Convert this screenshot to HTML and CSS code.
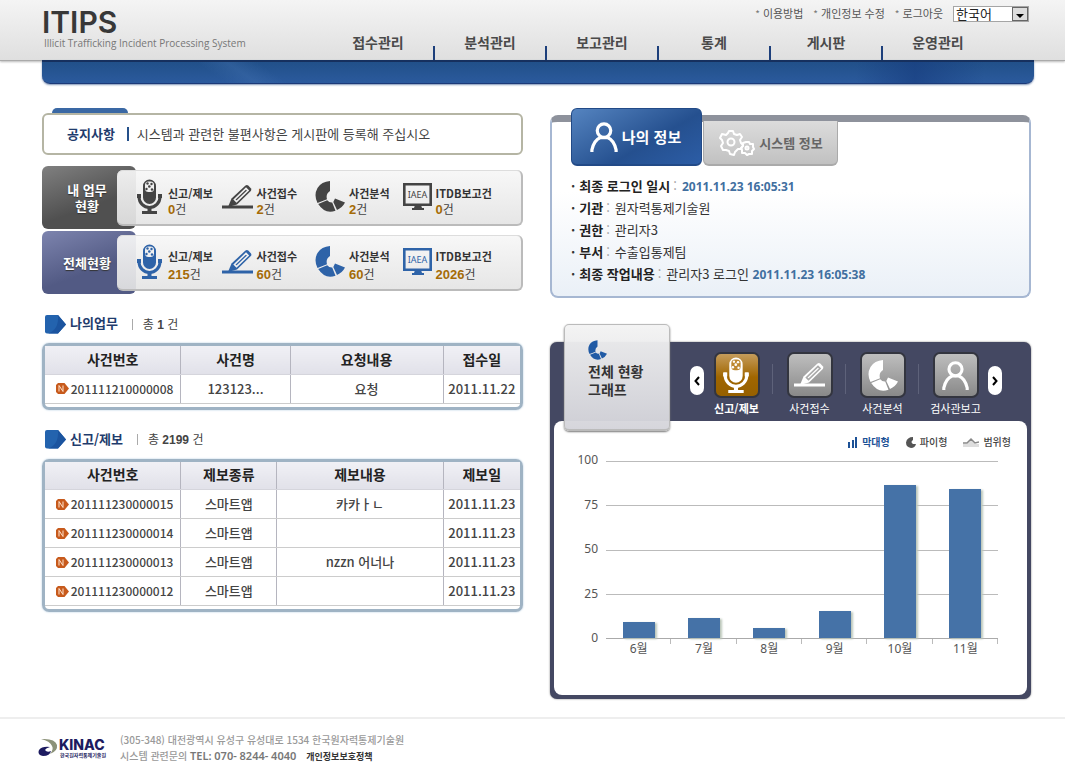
FILE: index.html
```html
<!DOCTYPE html>
<html lang="ko">
<head>
<meta charset="utf-8">
<meta name="viewport" content="width=device-width, initial-scale=1">
<title>ITIPS</title>
<link rel="stylesheet" href="styles.css">
</head>
<body>
<svg class="defs" width="0" height="0" aria-hidden="true">
  <symbol id="mic" viewBox="0 0 27 36">
    <path fill="currentColor" d="M6 7a6.500 6.500 0 0 1 13 0v11.500a6.500 6.500 0 0 1-13 0z"/>
    <rect x="8" y="2.500" width="9" height="10.500" rx="3.500" fill="var(--mesh,#f0f0f0)"/>
    <g fill="currentColor"><circle cx="10.500" cy="4.500" r="1.200"/><circle cx="14.500" cy="5" r="1.200"/><circle cx="12.300" cy="7.500" r="1.300"/><circle cx="9.500" cy="10" r="1.200"/><circle cx="15" cy="10.500" r="1.200"/></g>
    <path fill="none" stroke="currentColor" stroke-width="3" d="M2 15v3a10.500 10.500 0 0 0 21 0v-3"/>
    <path fill="currentColor" d="M0 15h4v4H0zM21 15h4v4h-4zM10.500 28h4v5h-4zM5 32h15v3H5z"/>
  </symbol>
  <symbol id="pen" viewBox="0 0 31 26">
    <path fill="currentColor" d="M0 21.500h31v3H0z"/>
    <path fill="currentColor" d="M6 23l3.500-8.500L23.500 1.500q1.500-1 3 .3l2.300 2.400q1.200 1.500 0 2.800L15 20.500z"/>
    <path fill="none" stroke="var(--mesh,#f0f0f0)" stroke-width="1.700" d="M12.500 15.500L24 4.500l2 2-11.500 11z"/>
  </symbol>
  <symbol id="pie" viewBox="0 0 30 31">
    <path fill="currentColor" d="M15 0v10q-4.500 3-3 8.300L2.500 22Q-1.500 14 2.500 7 6.500.5 15 0zM3.200 23l9-3.700q2 2.400 5 2.200l3.300 8.200Q10 33.500 3.200 23zM18.300 21l1.700-3.500 10 4q-2.500 5-8 7.500z"/>
  </symbol>
  <symbol id="monitor" viewBox="0 0 29 28">
    <path fill="none" stroke="currentColor" stroke-width="2.600" d="M1.300 1.300h26.400v20.400H1.300z"/>
    <path fill="currentColor" d="M12 22h6l1 3h2v2H9v-2h2z"/>
  </symbol>
  <symbol id="person" viewBox="0 0 26 28">
    <g fill="none" stroke="currentColor" stroke-width="3"><circle cx="13" cy="8" r="6.300"/><path d="M1.700 28v-2q2-9 8-11.500h6.600q6 2.500 8 11.500v2"/></g>
  </symbol>
  <symbol id="mark" viewBox="0 0 21 19">
    <path fill="#2363ae" d="M0 2q0-2 2-2h11l8 9.500-8 9H2q-2 0-2-2z"/><path fill="#1b549f" d="M13 0l8 9.500-8 9H3Q14 15 13 0z"/>
  </symbol>
  <symbol id="new" viewBox="0 0 13 11">
    <path fill="#c75a1c" d="M2 0h6.500L13 5.500 8.500 11H2L0 9V2z"/><path fill="none" stroke="#ffe4cf" d="M3 8.500v-6l4 6v-6"/>
  </symbol>
</svg>

<header class="top">
  <div class="top-inner">
    <a class="brand" href="#"><strong>ITIPS</strong><span>Illicit Trafficking Incident Processing System</span></a>
    <div class="top-right">
      <div class="util">
        <a href="#">이용방법</a><a href="#">개인정보 수정</a><a href="#">로그아웃</a>
        <label class="lang"><select aria-label="언어"><option>한국어</option><option>English</option></select><span class="lang-arrow"></span></label>
      </div>
      <nav class="gnb"><a href="#">접수관리</a><a href="#">분석관리</a><a href="#">보고관리</a><a href="#">통계</a><a href="#">게시판</a><a href="#">운영관리</a></nav>
    </div>
  </div>
</header>
<div class="bluebar"></div>

<main class="page">
  <div class="col">
    <section class="notice">
      <div class="notice-tab"></div>
      <div class="notice-box"><h2>공지사항</h2><p>시스템과 관련한 불편사항은 게시판에 등록해 주십시오</p></div>
    </section>
    <section class="status">
      <h2>내 업무<br>현황</h2>
      <ul>
        <li><svg width="27" height="36"><use href="#mic"/></svg><div><b>신고/제보</b><span><em>0</em>건</span></div></li>
        <li><svg width="31" height="26"><use href="#pen"/></svg><div><b>사건접수</b><span><em>2</em>건</span></div></li>
        <li><svg width="30" height="31"><use href="#pie"/></svg><div><b>사건분석</b><span><em>2</em>건</span></div></li>
        <li><svg width="29" height="28"><use href="#monitor"/><text class="iaea" x="14.500" y="15" text-anchor="middle">IAEA</text></svg><div><b>ITDB보고건</b><span><em>0</em>건</span></div></li>
      </ul>
    </section>
    <section class="status status-all">
      <h2>전체현황</h2>
      <ul>
        <li><svg width="27" height="36"><use href="#mic"/></svg><div><b>신고/제보</b><span><em>215</em>건</span></div></li>
        <li><svg width="31" height="26"><use href="#pen"/></svg><div><b>사건접수</b><span><em>60</em>건</span></div></li>
        <li><svg width="30" height="31"><use href="#pie"/></svg><div><b>사건분석</b><span><em>60</em>건</span></div></li>
        <li><svg width="29" height="28"><use href="#monitor"/><text class="iaea" x="14.500" y="15" text-anchor="middle">IAEA</text></svg><div><b>ITDB보고건</b><span><em>2026</em>건</span></div></li>
      </ul>
    </section>

    <section>
      <div class="head"><svg width="21" height="19"><use href="#mark"/></svg><h2>나의업무</h2><p>총 <b>1</b> 건</p></div>
      <div class="box">
        <table class="t-task">
          <thead><tr><th>사건번호</th><th>사건명</th><th>요청내용</th><th>접수일</th></tr></thead>
          <tbody><tr><td><a href="#"><svg width="13" height="11"><use href="#new"/></svg>201111210000008</a></td><td>123123...</td><td>요청</td><td>2011.11.22</td></tr></tbody>
        </table>
      </div>
    </section>
    <section>
      <div class="head"><svg width="21" height="19"><use href="#mark"/></svg><h2>신고/제보</h2><p>총 <b>2199</b> 건</p></div>
      <div class="box">
        <table class="t-report">
          <thead><tr><th>사건번호</th><th>제보종류</th><th>제보내용</th><th>제보일</th></tr></thead>
          <tbody>
            <tr><td><a href="#"><svg width="13" height="11"><use href="#new"/></svg>201111230000015</a></td><td>스마트앱</td><td>카카ㅏㄴ</td><td>2011.11.23</td></tr>
            <tr><td><a href="#"><svg width="13" height="11"><use href="#new"/></svg>201111230000014</a></td><td>스마트앱</td><td></td><td>2011.11.23</td></tr>
            <tr><td><a href="#"><svg width="13" height="11"><use href="#new"/></svg>201111230000013</a></td><td>스마트앱</td><td>nzzn 어너나</td><td>2011.11.23</td></tr>
            <tr><td><a href="#"><svg width="13" height="11"><use href="#new"/></svg>201111230000012</a></td><td>스마트앱</td><td></td><td>2011.11.23</td></tr>
          </tbody>
        </table>
      </div>
    </section>
  </div>

  <div class="col">
    <section class="info">
      <div class="tabs">
        <button class="tab tab-on" type="button"><svg width="28" height="30" viewBox="0 0 26 28"><use href="#person"/></svg>나의 정보</button>
        <button class="tab" type="button"><svg width="37" height="28" viewBox="0 0 37 28" fill="none" stroke="#fff" stroke-width="2"><circle cx="13" cy="13" r="3.500"/><path stroke-linejoin="round" d="M11 2l4 0 1 3 3 1 3-1 2 3-2 3 1 3 2 2-2 4-3 0-3 3-1 3-4-1-1-3-3-1-3 0-2-4 2-3-1-3-2-2 2-4 4 1 2-2z"/><circle cx="29" cy="19" r="1.500"/><path stroke-linejoin="round" d="M28 13l3 0 1 2 3 0 0 3 1 2-2 2 0 3-3 0-2 1-2-2-3 0 0-3-1-2 2-2 0-3z"/></svg>시스템 정보</button>
      </div>
      <ul class="facts">
        <li><b>최종 로그인 일시</b><i>:</i><strong>2011.11.23 16:05:31</strong></li>
        <li><b>기관</b><i>:</i>원자력통제기술원</li>
        <li><b>권한</b><i>:</i>관리자3</li>
        <li><b>부서</b><i>:</i>수출입통제팀</li>
        <li><b>최종 작업내용</b><i>:</i>관리자3 로그인 <strong>2011.11.23 16:05:38</strong></li>
      </ul>
    </section>

    <section class="graph">
      <div class="graph-head">
        <h2><svg width="19" height="20"><use href="#pie"/></svg>전체 현황<br>그래프</h2>
        <div class="picker">
          <button class="arrow" type="button" aria-label="이전"><svg width="6" height="10" viewBox="0 0 6 10"><path d="M5 1L1.500 5 5 9"/></svg></button>
          <button class="kind kind-on" type="button"><span><svg width="28" height="37"><use href="#mic"/></svg></span>신고/제보</button>
          <button class="kind" type="button"><span><svg width="31" height="26"><use href="#pen"/></svg></span>사건접수</button>
          <button class="kind" type="button"><span><svg width="30" height="31"><use href="#pie"/></svg></span>사건분석</button>
          <button class="kind" type="button"><span><svg width="27" height="29"><use href="#person"/></svg></span>검사관보고</button>
          <button class="arrow" type="button" aria-label="다음"><svg width="6" height="10" viewBox="0 0 6 10"><path d="M1 1l3.500 4L1 9"/></svg></button>
        </div>
      </div>
      <div class="graph-body">
        <div class="types">
          <button class="type-on" type="button"><svg width="10" height="11" viewBox="0 0 10 11"><path fill="#1c5196" d="M0 5h2v6H0zM4 3h2v8H4zM7 0h2v11H7z"/></svg>막대형</button>
          <button type="button"><svg width="10" height="11" viewBox="0 0 10 11"><path fill="#555" d="M7 0v3q-3 2 0 4h3q-1 4-5 4-5-1-5-5.500Q1 0 7 0z"/></svg>파이형</button>
          <button type="button"><svg width="16" height="10" viewBox="0 0 16 10"><path fill="#ddd" d="M0 7h4l4-5 4 5h4v3H0z"/><path fill="none" stroke="#888" stroke-width="1.500" d="M0 6h4l4-4 4 4 4-1"/></svg>범위형</button>
        </div>
        <div class="chart">
          <div class="y-axis"><span>100</span><span>75</span><span>50</span><span>25</span><span>0</span></div>
          <div class="grid-lines"><i></i><i></i><i></i><i></i></div>
          <div class="bars">
            <div><i style="height:9%"></i></div><div><i style="height:11.5%"></i></div><div><i style="height:5.500%"></i></div><div><i style="height:15.500%"></i></div><div><i style="height:86.500%"></i></div><div><i style="height:84%"></i></div>
          </div>
          <div class="x-axis"><span>6월</span><span>7월</span><span>8월</span><span>9월</span><span>10월</span><span>11월</span></div>
        </div>
      </div>
    </section>
  </div>
</main>

<footer class="foot">
  <svg class="kinac" width="70" height="24" viewBox="0 0 70 24" role="img" aria-label="KINAC">
    <path fill="#8c9279" d="M3 2q14-1 16 6 1 6-7 9 4-5 2-8Q12 4 3 2z"/>
    <path fill="#1d1b60" d="M12 10Q4 9 1 13q-2 5 4 6 7 0 8-5-4 2-6-1 1-2 5-3z"/>
    <text class="kinac-name" x="21" y="13">KINAC</text><text class="kinac-sub" x="22" y="20">한국원자력통제기술원</text>
  </svg>
  <div class="addr">
    <p>(305-348) 대전광역시 유성구 유성대로 1534 한국원자력통제기술원</p>
    <p>시스템 관련문의 <b>TEL: 070- 8244- 4040</b><a href="#">개인정보보호정책</a></p>
  </div>
</footer>
</body>
</html>
```

FILE: styles.css
```css
* { box-sizing: border-box; }
body { margin: 0; background: #fff; color: #444; font: 13px/16px "Noto Sans CJK KR", sans-serif; }
h2, p, ul { margin: 0; padding: 0; font-size: inherit; }
ul { list-style: none; }
a { color: inherit; text-decoration: none; }
em, i { font-style: normal; }
button { border: 0; padding: 0; background: none; color: inherit; font: inherit; cursor: pointer; }
svg { display: block; flex: none; }
.defs { position: absolute; }

/* header */
.top { background: linear-gradient(#f4f4f4, #dfdfdf); border-bottom: 1px solid #aaa; box-shadow: 0 1px 2px #bbb; }
.top-inner { display: flex; justify-content: space-between; height: 60px; padding: 0 36px 0 42px; }
.brand { padding-top: 7px; color: #383838; }
.brand strong { display: block; font: 600 30px/30px "Inter", sans-serif; }
.brand span { display: block; padding-left: 2px; color: #777; font: 10px/12px "Open Sans", sans-serif; }
.top-right { display: flex; flex-direction: column; justify-content: space-between; align-items: flex-end; }
.util { display: flex; align-items: center; gap: 10px; padding-top: 5px; font-size: 11px; color: #555; }
.util a::before { content: "*"; padding-right: 3px; font-size: 10px; color: #777; }
.lang { position: relative; display: flex; }
.lang select { appearance: none; width: 76px; height: 16px; padding: 0 2px; border: 1px solid #a5a5a5; border-radius: 0; background: #fff; color: #222; font: 13px/14px "Noto Sans CJK KR", sans-serif; }
.lang-arrow { position: absolute; top: 1px; right: 1px; width: 16px; height: 14px; border: 1px solid #666; background: #ddd; pointer-events: none; }
.lang-arrow::after { content: ""; position: absolute; left: 3px; top: 6px; border: 4px solid transparent; border-top-color: #000; border-bottom: 0; }
.gnb { display: flex; padding-right: 34px; }
.gnb a { width: 112px; height: 27px; padding-right: 2px; color: #4a4a4a; font-size: 14px; font-weight: 700; line-height: 18px; text-align: center; background: linear-gradient(#1d3f7b, #1d3f7b) right bottom / 2px 14px no-repeat; }
.gnb a:last-child { background: none; }
.bluebar { position: relative; height: 24px; margin: -1px 31px 0 42px; border-top: 2px solid #16305e; border-bottom: 1px solid #1c3a78; border-radius: 0 0 8px 8px; box-shadow: 0 1px 2px #7d93b5; background: linear-gradient(35deg, transparent 18%, #3f6eac66 21%, transparent 24%), linear-gradient(90deg, transparent 82%, #163b7e99 88%, transparent 95%), linear-gradient(#215089, #2b5a9d); }

/* two-column page */
.page { display: grid; grid-template-columns: 1fr 1fr; gap: 27px; padding: 24px 34px 0 42px; }
.notice-tab { width: 76px; height: 5px; margin-left: 10px; border-radius: 5px 5px 0 0; background: #3a68a4; }
.notice-box { display: flex; align-items: center; height: 42px; padding-left: 23px; border: 2px solid #b5b5a4; border-radius: 6px; }
.notice-box h2 { padding-right: 12px; border-right: 2px solid #25508a; color: #1f3c6d; line-height: 14px; }
.notice-box p { padding-left: 8px; }

.status { display: flex; align-items: center; margin-top: 11px; }
.status + .status { margin-top: 2px; }
.status h2 { display: grid; align-content: center; width: 94px; height: 63px; padding: 0 19px 0 15px; border-radius: 6px; background: linear-gradient(160deg, #808080, #505050 60%); color: #fff; text-align: center; white-space: nowrap; text-shadow: 0 1px 1px #333; }
.status-all h2 { background: linear-gradient(160deg, #7d84ae, #525a84 60%); }
.status ul { position: relative; flex: 1; display: grid; grid-template-columns: 85fr 94fr 88fr 119fr; height: 56px; margin-left: -19px; padding-left: 20px; border: solid #bbb; border-width: 0 2px 2px 0; border-radius: 6px; background: linear-gradient(#f7f7f7ee, #e4e4e4ea); box-shadow: inset 0 1px #ddd; }
.status li { display: flex; align-items: center; gap: 4px; }
.status-all svg { color: #2e63a8; }
.status b, .status span { display: block; white-space: nowrap; }
.status b { font-size: 11px; color: #333; }
.status span { font-size: 12px; }
.status div { padding-top: 9px; }
.status-all span { line-height: 20px; }
.status em { font-weight: 700; font-family: "Liberation Sans", sans-serif; font-size: 13px; color: #a56b06; }
.iaea { font: 9px "Noto Sans", sans-serif; fill: currentColor; }

.head { display: flex; align-items: center; height: 20px; margin: 20px 0 9px 3px; }
.head h2 { padding: 0 14px 2px 4px; color: #1f3c6d; }
.head p { padding-left: 10px; border-left: 1px solid #aaa; font-size: 12px; line-height: 10px; }
.head b { font: 700 12px/10px "Liberation Sans", sans-serif; }
.box { padding-bottom: 3px; border: 3px solid #9fb3c4; border-radius: 7px; box-shadow: 0 0 2px #a9c4dc; }
table { width: 100%; table-layout: fixed; border-collapse: collapse; }
th, td { height: 29px; padding: 0; border-bottom: 1px solid #ccc; border-left: 1px solid #b5b5bf; text-align: center; white-space: nowrap; }
th { height: 28px; padding-bottom: 2px; background: linear-gradient(#f0f0f5, #e1e1e9); border-bottom-color: #d5d5dc; color: #222; font-size: 14px; }
td { font-weight: 500; }
th:first-child, td:first-child { border-left: 0; }
td a { display: flex; align-items: center; justify-content: flex-end; gap: 2px; padding-right: 7px; font-size: 12px; }
th:nth-child(1) { width: 28.600%; }
.t-task th:nth-child(2) { width: 23%; }
.t-report th:nth-child(2) { width: 20.200%; }
th:nth-child(4) { width: 16.200%; }

/* my information */
.info { margin-top: 7px; border: 2px solid #a6b7d2; border-top: 7px solid #8e929c; border-radius: 8px; background: linear-gradient(#fff 40%, #eaf0f7); }
.tabs { display: flex; align-items: flex-end; gap: 1px; margin: -14px 0 0 19px; }
.tab { display: flex; align-items: center; justify-content: center; gap: 4px; width: 135px; height: 45px; border: solid #aaa; border-width: 0 1px 2px; border-radius: 0 0 6px 6px; background: linear-gradient(#dcdcdc, #c1c1c1); color: #666; font-weight: 700; }
.tab-on { width: 131px; height: 58px; padding-right: 2px; border: 1px solid #224a87; border-bottom-width: 2px; border-radius: 6px; background: linear-gradient(150deg, #5584c0, #25508f 60%, #2c5da6); color: #fff; font-size: 15px; }
.facts { padding: 9px 0 11px 19px; line-height: 22px; color: #333; }
.facts li::before { content: "·"; padding-right: 4px; font-weight: 700; }
.facts b { color: #222; }
.facts i { padding: 0 5px 0 3px; color: #999; }
.facts strong { font: 700 12px "Noto Sans", sans-serif; color: #416f9f; }

/* graph panel */
.graph { margin-top: 44px; padding: 0 4px 4px; border-radius: 7px; background: #444862; box-shadow: 0 0 2px #777; }
.graph-head { display: flex; justify-content: space-between; height: 79px; }
.graph h2 { position: relative; width: 106px; height: 107px; margin: -18px 0 0 10px; padding: 15px 0 0 23px; border: 1px solid #bbb; border-bottom-width: 2px; border-radius: 5px; background: linear-gradient(#f3f3f3f5, #d4d4daf5); box-shadow: 0 1px 2px #777; color: #333; font-size: 14px; line-height: 18px; }
.graph h2 svg { margin-bottom: 2px; color: #205aa5; }
.picker { display: flex; padding: 10px 25px 0 0; color: #fff; }
.kind { width: 73px; height: 66px; font-size: 11px; line-height: 20px; display: flex; flex-direction: column; align-items: center; background: linear-gradient(#5e627a, #5e627a) right 12px / 1px 30px no-repeat; }
.kind:nth-last-child(2) { background: none; }
.kind span { --mesh: #aaa; display: grid; place-items: center; width: 46px; height: 47px; border: 2px solid #33353f; border-radius: 7px; background: linear-gradient(#bebebe, #898989); }
.kind-on { font-weight: 700; }
.kind-on span { --mesh: #bd882f; background: linear-gradient(#c59c5b, #a06600 55%, #966000); }
.arrow { display: grid; place-items: center; width: 14px; height: 29px; margin: 14px -4px 0 0; border-radius: 7px; background: #fff; position: relative; }
.arrow:last-child { margin: 14px 0 0 -4px; }
.arrow path { fill: none; stroke: #000; stroke-width: 2; }
.graph-body { padding: 12px 16px 36px 23px; border-radius: 8px; background: #fff; }
.types { display: flex; justify-content: flex-end; gap: 16px; height: 18px; font-size: 10px; font-weight: 500; }
.types button { display: flex; align-items: center; gap: 4px; }
.types .type-on { color: #1c5196; font-weight: 700; }
.chart { display: grid; grid-template: 178px 20px / 21px 1fr; column-gap: 8px; margin: 10px 13px 0 0; font: 12px/16px "Noto Sans", "Noto Sans CJK KR", sans-serif; color: #555; }
.y-axis { display: flex; flex-direction: column; justify-content: space-between; margin: -9px 0 -7px; text-align: right; }
.grid-lines { grid-area: 1 / 2; display: grid; grid-template-rows: repeat(4, 1fr); border-bottom: 1px solid #aaa; }
.grid-lines i { border-top: 1px solid #bbb; }
.bars { grid-area: 1 / 2; display: flex; padding-bottom: 1px; }
.bars div { flex: 1; display: flex; align-items: flex-end; justify-content: center; }
.bars i { width: 32px; background: #4572a7; box-shadow: 2px 1px 2px #bcc7bb; }
.x-axis { grid-area: 2 / 2; display: flex; }
.x-axis span { flex: 1; padding-top: 2px; text-align: center; background: linear-gradient(#bbb, #bbb) right top / 1px 5px no-repeat; }

/* footer */
.foot { display: flex; gap: 12px; margin-top: 18px; padding: 13px 38px 20px; border-top: 2px solid #eee; color: #999; font-size: 10px; }
.kinac { margin-top: 5px; }
.kinac-name { fill: #1d1b60; font: 800 14px "Inter", sans-serif; }
.kinac-sub { fill: #1d1b60; font: 700 5px "Noto Sans CJK KR", sans-serif; }
.foot p { font-weight: 500; }
.foot b { font: 600 11px "Noto Sans", sans-serif; color: #777; }
.foot a { padding-left: 10px; color: #333; font-size: 9px; font-weight: 700; }
```
